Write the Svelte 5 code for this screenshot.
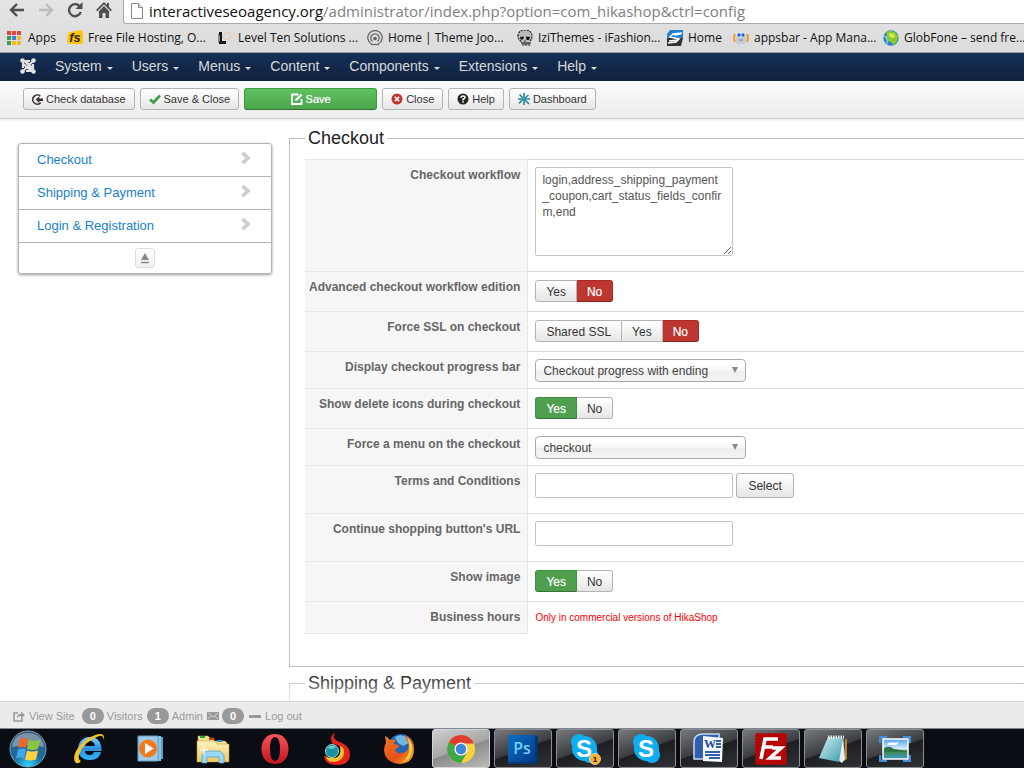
<script>
  const menus = ['System', 'Users', 'Menus', 'Content', 'Components', 'Extensions', 'Help'];
  const sections = ['Checkout', 'Shipping & Payment', 'Login & Registration'];

  let workflow = 'login,address_shipping_payment\n_coupon,cart_status_fields_confir\nm,end';
  let advanced = 'No';
  let ssl = 'No';
  let progress = 'Checkout progress with ending';
  let deleteIcons = 'Yes';
  let menu = 'checkout';
  let terms = '';
  let shopUrl = '';
  let showImage = 'Yes';
</script>

<div class="screen">
  <!-- Browser chrome -->
  <header class="browser">
    <div class="nav-row">
      <div class="nav-btns">
        <button aria-label="Back">
          <svg width="16" height="16" viewBox="0 0 16 16" fill="none" stroke="#4e4e4e" stroke-width="2.4"><path d="M15 8H2M8 2L2 8l6 6"/></svg>
        </button>
        <button aria-label="Forward">
          <svg width="16" height="16" viewBox="0 0 16 16" fill="none" stroke="#bbb" stroke-width="2.4"><path d="M1 8h13M8 2l6 6-6 6"/></svg>
        </button>
        <button aria-label="Reload">
          <svg width="16" height="16" viewBox="0 0 16 16"><path d="M12.6 4.2A6 6 0 1 0 13.8 10" fill="none" stroke="#4e4e4e" stroke-width="2.4"/><path d="M15.5 0v7H8.5z" fill="#4e4e4e"/></svg>
        </button>
        <button aria-label="Home page">
          <svg width="16" height="16" viewBox="0 0 16 16" fill="#4e4e4e"><path d="M8 0L0 8l1.2 1.2L8 2.6l6.8 6.6L16 8l-3-3V1h-2v2z"/><path d="M3 9l5-5 5 5v7H9.500v-5h-3v5H3z"/></svg>
        </button>
      </div>
      <div class="omnibox">
        <svg width="12" height="16" viewBox="0 0 12 16"><path d="M.5 .5h7l4 4v11h-11z" fill="#fff" stroke="#888"/><path d="M7.500 .5v4h4" fill="#ddd" stroke="#888"/></svg>
        <div class="url" role="textbox" tabindex="0" aria-label="Address">interactiveseoagency.org<span>/administrator/index.php?option=com_hikashop&amp;ctrl=config</span></div>
      </div>
    </div>
    <nav class="bookmarks">
      <a class="apps" href="#apps">
        <svg width="14" height="14" viewBox="0 0 14 14">
          <path d="M0 0h4v4H0zM5 0h4v4H5zM10 0h4v4h-4z" fill="#e5433b"/>
          <path d="M0 5h4v4H0zM0 10h4v4H0z" fill="#3a9a52"/>
          <path d="M5 5h4v4H5z" fill="#3d7fe6"/>
          <path d="M10 5h4v4h-4zM5 10h4v4H5zM10 10h4v4h-4z" fill="#f5b921"/>
        </svg>
        Apps
      </a>
      <a href="#fs">
        <svg width="16" height="16" viewBox="0 0 16 16"><path d="M1 3l2-1 11-2 2 2v11l-2 1H2l-2-2z" fill="#fcc80e"/><text x="8" y="12" text-anchor="middle" font-family="Liberation Sans" font-size="13" font-weight="bold" font-style="italic" fill="#3a2800">fs</text></svg>
        Free File Hosting, O...
      </a>
      <a href="#ten">
        <svg width="16" height="16" viewBox="0 0 16 16"><path d="M2 2h3v9h4v3H2z" fill="#151515"/><path d="M1 3l2 3v5l-2 2z" fill="#888"/><circle cx="10" cy="6" r="3.500" fill="none" stroke="#e9b99a" stroke-width="1.500" stroke-dasharray="1.500 1.500"/></svg>
        Level Ten Solutions ...
      </a>
      <a href="#theme">
        <svg width="16" height="16" viewBox="0 0 16 16" fill="none" stroke="#666" stroke-width="1.300"><path d="M4.500 14A7.200 7.200 0 1 1 11.500 14M5.500 11.500a4.200 4.200 0 1 1 5 0"/><circle cx="8" cy="8.500" r="1.200" fill="#555"/><path d="M4 14.500h8"/></svg>
        Home | Theme Joo...
      </a>
      <a href="#izi">
        <svg width="16" height="16" viewBox="0 0 16 16"><path d="M1 6C1 2 4 0 8 0s7 2 7 6c0 3-1 4-2 5v4H5v-3C3 11 1 9 1 6z" fill="#bbb" stroke="#222" stroke-width="1.200" stroke-dasharray="2 1"/><path d="M3 7l4-.5L6 9.500H3.500zM9 6.500l4 .5-1 3H9.500z" fill="#111"/><path d="M7 11h2M6 13h6M7 15v-3M9 15v-3M11 15v-3" stroke="#444"/></svg>
        IziThemes - iFashion...
      </a>
      <a class="short" href="#home">
        <svg width="16" height="16" viewBox="0 0 16 16"><path d="M3 0h13v8H0V4z" fill="#2181cd"/><path d="M0 8h16l-2 8H0z" fill="#333"/><path d="M15 3L6 4 3 7l9 2-3 3-8 1M14 4L7 5M11 10l-9 1" fill="none" stroke="#fff" stroke-width="1.600"/></svg>
        Home
      </a>
      <a href="#appsbar">
        <svg width="16" height="16" viewBox="0 0 16 16"><path d="M2 4Q0 8 2 12M14 4q2 4 0 8" fill="none" stroke="#f49a28" stroke-width="2"/><rect x="3" y="2" width="10" height="12" rx="3" fill="#c5cad5"/><rect x="3" y="2" width="10" height="5" rx="2" fill="#dfe6f3"/><circle cx="6" cy="5" r="1.700" fill="#2664d2"/><circle cx="10" cy="5" r="1.700" fill="#2664d2"/><path d="M6 10h4" stroke="#778"/></svg>
        appsbar - App Mana...
      </a>
      <a href="#globfone">
        <svg width="16" height="16" viewBox="0 0 16 16"><circle cx="8" cy="8" r="7.700" fill="#2c82cf"/><path d="M3 2Q8 0 12 2l3 4-1 6-4 3-2-3-4-1-2-4 2-2z" fill="#8dc928"/><path d="M6 3l5 1 1 3-3 1-3-2z" fill="#d8ea53"/><path d="M1 6q4 1 3 8" stroke="#78c9ef" stroke-width="1.500" fill="none"/></svg>
        GlobFone – send fre...
      </a>
    </nav>
  </header>

  <!-- Administrator menu -->
  <nav class="menubar">
    <a class="logo" href="#joomla" aria-label="Joomla">
      <svg width="16" height="16" viewBox="0 0 16 16" fill="none" stroke="#e0e0e0">
        <path d="M3 10V5.500Q3 3 5.500 3L13 10.500M10 3H5L13 13M13 6v5q0 2-2 2L3 5.500M6 13h5M3 13L13 3" stroke-width="2.200"/>
        <g fill="#e0e0e0" stroke="none"><circle cx="2.500" cy="2.500" r="2.300"/><circle cx="13.500" cy="2.500" r="2.300"/><circle cx="2.500" cy="13.500" r="2.300"/><circle cx="13.500" cy="13.500" r="2.300"/></g>
      </svg>
    </a>
    {#each menus as item}
      <a class="menu" href="#{item}">{item}<span class="caret"></span></a>
    {/each}
  </nav>

  <!-- Toolbar -->
  <div class="toolbar">
    <button class="tool">
      <svg width="11" height="11" viewBox="0 0 12 12"><path d="M9 2.200A5 5 0 1 0 9.500 9.500" fill="none" stroke="#333" stroke-width="1.800"/><path d="M4 6l4-3.500V5h4v2.500H8V10z" fill="#333"/></svg>
      Check database
    </button>
    <button class="tool">
      <svg width="12" height="11" viewBox="0 0 12 11"><path d="M1 5.500l3.500 3L11 1.500" fill="none" stroke="#43a047" stroke-width="2.800"/></svg>
      Save &amp; Close
    </button>
    <button class="tool save">
      <svg width="12" height="12" viewBox="0 0 12 12" fill="none" stroke="#fff" stroke-width="1.800"><path d="M7.500 1.500H1v9.500h9.500V6"/><path d="M4 8l.6-2.300L10 .8 11.500 2.300 6.200 7.500z" fill="#fff" stroke="none"/></svg>
      Save
    </button>
    <button class="tool">
      <svg width="12" height="12" viewBox="0 0 12 12"><circle cx="6" cy="6" r="5.500" fill="#bd362f"/><path d="M3.800 3.800l4.400 4.400M8.200 3.800L3.800 8.200" stroke="#fff" stroke-width="1.600"/></svg>
      Close
    </button>
    <button class="tool">
      <svg width="12" height="12" viewBox="0 0 12 12"><circle cx="6" cy="6" r="5.500" fill="#222"/><path d="M4 4.800Q4 3 6 3t2 1.600Q8 5.800 6 6.300V7.500M6 8.300v1.400" fill="none" stroke="#fff" stroke-width="1.500"/></svg>
      Help
    </button>
    <button class="tool">
      <svg width="12" height="12" viewBox="0 0 12 12" fill="none" stroke="#24869a" stroke-width="1.600"><path d="M6 0v5M0 6h5M1.500 1.500L5 5M10.500 2L6 6M5 6l-4 4.500M6 6v6M7 6h5M7 7l4 4"/></svg>
      Dashboard
    </button>
  </div>

  <main class="content">
    <aside class="sidebar">
      {#each sections as name}
        <a href="#{name}">
          {name}
          <svg width="10" height="12" viewBox="0 0 10 12"><path d="M1.500 1L7 6l-5.500 5" fill="none" stroke="#ccc" stroke-width="3.600"/></svg>
        </a>
      {/each}
      <div class="top-row">
        <button class="to-top" aria-label="Back to top">
          <svg width="10" height="11" viewBox="0 0 10 11"><path d="M5 0l4 7H1z" fill="#888"/><path d="M1 9.500h8" stroke="#888" stroke-width="1.500"/></svg>
        </button>
      </div>
    </aside>

    <form class="settings" on:submit|preventDefault>
      <fieldset>
        <legend>Checkout</legend>
        <table>
          <tbody>
            <tr>
              <th scope="row"><label for="workflow">Checkout workflow</label></th>
              <td><textarea id="workflow" bind:value={workflow} spellcheck="false"></textarea></td>
            </tr>
            <tr>
              <th scope="row">Advanced checkout workflow edition</th>
              <td>
                <div class="group">
                  {#each ['Yes', 'No'] as v}
                    <label class:on={advanced === v} class:no={v === 'No'}><input type="radio" name="advanced" value={v} bind:group={advanced} />{v}</label>
                  {/each}
                </div>
              </td>
            </tr>
            <tr>
              <th scope="row">Force SSL on checkout</th>
              <td>
                <div class="group">
                  {#each ['Shared SSL', 'Yes', 'No'] as v}
                    <label class:on={ssl === v} class:no={v === 'No'}><input type="radio" name="ssl" value={v} bind:group={ssl} />{v}</label>
                  {/each}
                </div>
              </td>
            </tr>
            <tr>
              <th scope="row"><label for="progress">Display checkout progress bar</label></th>
              <td>
                <div class="select">
                  <select id="progress" bind:value={progress}>
                    <option>Checkout progress with ending</option>
                    <option>Checkout progress</option>
                    <option>No</option>
                  </select>
                </div>
              </td>
            </tr>
            <tr>
              <th scope="row">Show delete icons during checkout</th>
              <td>
                <div class="group">
                  {#each ['Yes', 'No'] as v}
                    <label class:on={deleteIcons === v} class:no={v === 'No'}><input type="radio" name="deleteIcons" value={v} bind:group={deleteIcons} />{v}</label>
                  {/each}
                </div>
              </td>
            </tr>
            <tr>
              <th scope="row"><label for="menu">Force a menu on the checkout</label></th>
              <td>
                <div class="select">
                  <select id="menu" bind:value={menu}>
                    <option>checkout</option>
                    <option>home</option>
                  </select>
                </div>
              </td>
            </tr>
            <tr>
              <th scope="row"><label for="terms">Terms and Conditions</label></th>
              <td>
                <div class="field">
                  <input id="terms" type="text" bind:value={terms} />
                  <button class="pick" type="button">Select</button>
                </div>
              </td>
            </tr>
            <tr>
              <th scope="row"><label for="shopUrl">Continue shopping button's URL</label></th>
              <td><div class="field"><input id="shopUrl" type="text" bind:value={shopUrl} /></div></td>
            </tr>
            <tr>
              <th scope="row">Show image</th>
              <td>
                <div class="group">
                  {#each ['Yes', 'No'] as v}
                    <label class:on={showImage === v} class:no={v === 'No'}><input type="radio" name="showImage" value={v} bind:group={showImage} />{v}</label>
                  {/each}
                </div>
              </td>
            </tr>
            <tr class="last">
              <th scope="row">Business hours</th>
              <td><small>Only in commercial versions of HikaShop</small></td>
            </tr>
          </tbody>
        </table>
      </fieldset>

      <fieldset>
        <legend>Shipping &amp; Payment</legend>
      </fieldset>
    </form>
  </main>

  <!-- Status bar -->
  <footer class="status">
    <a href="#site">
      <svg width="12" height="11" viewBox="0 0 12 11"><path d="M5 2H1v8h8V7" fill="none" stroke="#999" stroke-width="1.500"/><path d="M3.500 7Q4 3 8 3V.5L12 4 8 7.500V5Q5 5 3.500 7z" fill="#999"/></svg>
      View Site
    </a>
    <span class="stat"><b>0</b>Visitors</span>
    <span class="stat"><b>1</b>Admin</span>
    <span class="stat mail">
      <svg width="12" height="8" viewBox="0 0 12 8"><path d="M0 0h12v8H0z" fill="#999"/><path d="M1 1l5 4 5-4M1 7l3-3M11 7L8 4" fill="none" stroke="#ddd" stroke-width=".8"/></svg>
      <b>0</b>
    </span>
    <a href="#logout">
      <svg width="12" height="3" viewBox="0 0 12 3"><path d="M0 0h12v3H0z" fill="#999"/></svg>
      Log out
    </a>
  </footer>

  <!-- Windows taskbar -->
  <div class="taskbar">
    <svg class="defs" width="0" height="0" aria-hidden="true">
      <defs>
        <radialGradient id="orb" cx=".5" cy=".95" r=".9"><stop offset="0" stop-color="#2fd6ff"/><stop offset=".4" stop-color="#1b6fa8"/><stop offset="1" stop-color="#38566f"/></radialGradient>
        <linearGradient id="ie" x1="0" y1="0" x2="0" y2="1"><stop offset="0" stop-color="#7fd3fa"/><stop offset=".5" stop-color="#2a8fe0"/><stop offset="1" stop-color="#35b5f5"/></linearGradient>
        <linearGradient id="folder" x1="0" y1="0" x2="0" y2="1"><stop offset="0" stop-color="#fdf3b8"/><stop offset="1" stop-color="#ecc964"/></linearGradient>
        <linearGradient id="red" x1="0" y1="0" x2="0" y2="1"><stop offset="0" stop-color="#f8555a"/><stop offset="1" stop-color="#c3121e"/></linearGradient>
        <linearGradient id="fox" x1="0" y1="0" x2="1" y2="1"><stop offset="0" stop-color="#f47b20"/><stop offset=".6" stop-color="#e6501b"/><stop offset="1" stop-color="#fbc02d"/></linearGradient>
        <linearGradient id="psg" x1="0" y1="0" x2="1" y2="1"><stop offset="0" stop-color="#0d6fc4"/><stop offset="1" stop-color="#043a86"/></linearGradient>
        <linearGradient id="pad" x1="0" y1="0" x2="1" y2="1"><stop offset="0" stop-color="#d8f2f5"/><stop offset="1" stop-color="#3799a8"/></linearGradient>
        <linearGradient id="sky" x1="0" y1="0" x2="0" y2="1"><stop offset="0" stop-color="#4aa3ea"/><stop offset=".5" stop-color="#d9f0fb"/><stop offset=".6" stop-color="#3f8a4c"/><stop offset="1" stop-color="#3f97c9"/></linearGradient>
      </defs>
    </svg>
    <button class="start" aria-label="Start">
      <svg width="38" height="38" viewBox="0 0 38 38">
        <circle cx="19" cy="19" r="18" fill="url(#orb)" stroke="#7ba0b8"/>
        <path d="M3 17Q5 3 19 3t16 14Q19 13 3 17z" fill="#fff" opacity=".35"/>
        <path d="M11 9q4-2 8 0l-2 9q-4-2-8 0z" fill="#f0642c"/>
        <path d="M20 10q5 2 11 0l-2 9q-6 2-11 0z" fill="#8cc63f"/>
        <path d="M9 19.500q4-2 8 0l-2 9q-4-2-8 0z" fill="#3ea7e8"/>
        <path d="M18 20.500q5 2 11 0l-2 9q-6 2-11 0z" fill="#fdd23b"/>
      </svg>
    </button>
    <button class="task" aria-label="Internet Explorer">
      <svg width="34" height="32" viewBox="0 0 34 32">
        <path d="M18 4C10 4 6 10 6 16s4 11 12 11c6 0 10-3 11-8h-7q-1 3-4 3-5 0-5-4h16.500C30 10 26 4 18 4zm-5 9q1-5 5-5t5 5z" fill="url(#ie)" fill-rule="evenodd"/>
        <path d="M4 30C-3 23 11 4 27 1q6-1 5 6-1-5-5-4Q11 9 7 22q-1 5 2 6-2 3-5 2z" fill="#f5c32c"/>
      </svg>
    </button>
    <button class="task" aria-label="Media Player">
      <svg width="28" height="28" viewBox="0 0 28 28"><path d="M10 2h16v22H10z" fill="#5e9fc6"/><path d="M6 1h18v25H6z" fill="#8cc3e2"/><path d="M1 1h20v25H1z" fill="#9fcbe6" stroke="#5e9fc6"/><circle cx="11" cy="13.500" r="9" fill="#f37920"/><path d="M8 8l8.500 5.500L8 19z" fill="#fff"/></svg>
    </button>
    <button class="task" aria-label="Explorer">
      <svg width="34" height="32" viewBox="0 0 34 32"><path d="M2 6V3h10l2 2h4v3h11l2 2v4H2z" fill="#f7e08d" stroke="#c59a3a" stroke-width=".5"/><path d="M4 3h5v2H4z" fill="#1fae3c"/><path d="M13 5h5v2h-5z" fill="#d83a2b"/><path d="M21 7h5v2h-5z" fill="#2f87d8"/><path d="M1 8h18l2 3h12v18H1z" fill="url(#folder)" stroke="#c59a3a" stroke-width=".5"/><path d="M6 30V22l4-4h14l4 4v8h-5v-6H11v6z" fill="#9bd8f3" stroke="#4c9cc6" stroke-width=".7"/><path d="M8 12v10M4 17h8" stroke="#fff"/></svg>
    </button>
    <button class="task" aria-label="Opera">
      <svg width="30" height="32" viewBox="0 0 30 32"><path d="M15 1C7 1 1.500 7 1.500 16S7 31 15 31s13.500-6 13.500-15S23 1 15 1zm0 3q5 0 5 12t-5 12-5-12T15 4z" fill="url(#red)" fill-rule="evenodd"/></svg>
    </button>
    <button class="task" aria-label="Torch">
      <svg width="30" height="34" viewBox="0 0 30 34"><path d="M13 0q-4 7 5 10 10 4 10 12 0 11-13 11Q3 33 2 24l10 4q9-1 8-9-1-6-9-7Q6 6 13 0z" fill="#e4231f"/><path d="M3 20q0 10 9 10 10-1 10-10 0-5-4-6 2 12-7 12T3 20z" fill="#f6c32c"/><circle cx="10" cy="19" r="6.500" fill="#1893a0" stroke="#9bd5db"/><path d="M5 16q5-4 9-1-3 3-9 1z" fill="#74ccd2"/></svg>
    </button>
    <button class="task" aria-label="Firefox">
      <svg width="32" height="32" viewBox="0 0 32 32"><circle cx="18" cy="14" r="13" fill="#2265b4"/><path d="M12 4q7-4 12 1l2 5-6 3-5-3z" fill="#6db7e8"/><path d="M2 3q3 1 5 4 4-1 7 0-4 2-3 4l5 1q0 3-4 4 1 5 7 4 8-2 6-10-1-4-4-8 9 3 10 12 1 16-14 17Q2 30 1 17q0-4 2-7z" fill="url(#fox)"/><path d="M24 4q7 6 5 15-2 8-9 10 10-9 4-25z" fill="#fcd04b"/></svg>
    </button>
    <button class="task open active" aria-label="Chrome">
      <svg width="30" height="30" viewBox="0 0 30 30"><circle cx="15" cy="15" r="14" fill="#fcd23c"/><path d="M15 15L2.900 8A14 14 0 0 0 15 29l6-10.500z" fill="#3fa64a"/><path d="M15 15L2.900 8A14 14 0 0 1 28 9.500H15z" fill="#df3d32"/><circle cx="15" cy="15" r="6.600" fill="#f5f5f5"/><circle cx="15" cy="15" r="5.200" fill="#3f86dc"/></svg>
    </button>
    <button class="task open" aria-label="Photoshop">
      <svg width="30" height="30" viewBox="0 0 30 30"><path d="M0 1h27l3 2v26l-3 1H0z" fill="#06356f"/><path d="M0 1h27v27H0z" fill="url(#psg)"/><text x="14" y="20" text-anchor="middle" font-family="Open Sans" font-size="16" font-weight="600" fill="#6fd2ff">Ps</text></svg>
    </button>
    <button class="task open" aria-label="Skype, 1 message">
      <svg width="32" height="32" viewBox="0 0 32 32"><g fill="#10aeee"><circle cx="10" cy="9" r="8"/><circle cx="21" cy="22" r="8"/><circle cx="15.500" cy="15.500" r="12.500"/></g><text x="15" y="24" text-anchor="middle" font-family="Liberation Sans" font-size="24" font-weight="bold" fill="#fff">S</text><circle cx="26" cy="26" r="5.500" fill="#fbb01c" stroke="#fff" stroke-width=".6"/><text x="26" y="29" text-anchor="middle" font-family="Liberation Sans" font-size="8" font-weight="bold" fill="#111">1</text></svg>
    </button>
    <button class="task open" aria-label="Skype">
      <svg width="32" height="32" viewBox="0 0 32 32"><g fill="#10aeee"><circle cx="10" cy="9" r="8"/><circle cx="21" cy="22" r="8"/><circle cx="15.500" cy="15.500" r="12.500"/></g><text x="15" y="24" text-anchor="middle" font-family="Liberation Sans" font-size="24" font-weight="bold" fill="#fff">S</text></svg>
    </button>
    <button class="task open" aria-label="Word">
      <svg width="32" height="32" viewBox="0 0 32 32"><path d="M1 26V8q1-7 9-7h16v25z" fill="#315fae" stroke="#c7d9f2" stroke-width="1.500"/><path d="M10 3l20 2-1 24-19-1z" fill="#f4f8ff"/><text x="17" y="15" text-anchor="middle" font-family="Liberation Serif" font-size="12" font-weight="bold" fill="#22499a">W</text><path d="M23 8h5M23 11h5M23 14h5M12 19h15M12 22h15M16 25h11" stroke="#315fae" stroke-width="2"/></svg>
    </button>
    <button class="task open" aria-label="FileZilla">
      <svg width="32" height="32" viewBox="0 0 32 32"><path d="M1 1h30v30H1z" fill="#b50505" stroke="#b50505" stroke-width="2" stroke-dasharray="2 1"/><path d="M6 26L10 6h13M9 14h9M17 15h9L15 25h11" fill="none" stroke="#fff" stroke-width="3.600"/></svg>
    </button>
    <button class="task open" aria-label="Notepad">
      <svg width="32" height="30" viewBox="0 0 32 30"><path d="M28 5h2v20l-3 2z" fill="#b78338"/><path d="M26 3l2 22-3 4-4-3z" fill="#e8eff0"/><path d="M11 3l15 1-4 24-20-4z" fill="url(#pad)"/><path d="M11 3h16" stroke="#e9edee" stroke-width="3" stroke-dasharray="1.500 1"/></svg>
    </button>
    <button class="task open" aria-label="Picture viewer">
      <svg width="32" height="26" viewBox="0 0 32 26"><path d="M1 7V1h7M24 1h7v6M31 19v6h-7M8 25H1v-6" fill="none" stroke="#3f8fdc" stroke-width="2.500"/><path d="M4 3h25v20H4z" fill="url(#sky)" stroke="#fff" stroke-width="1.500"/><path d="M5 12q5-3 10 1l13 2v1H5z" fill="#2c7446"/><path d="M8 8q4-3 7-1l5-1-3 3H9z" fill="#fff"/></svg>
    </button>
  </div>
</div>

<style>
  :global(body) {
    margin: 0;
    background: #fff;
  }

  .screen {
    height: 100vh;
    display: flex;
    flex-direction: column;
    overflow: hidden;
    font-family: 'Liberation Sans', Arial, sans-serif;
    font-size: 12px;
    line-height: 16px;
    color: #333;
  }

  a { text-decoration: none; }
  svg { flex-shrink: 0; }

  button {
    font-family: inherit;
    cursor: pointer;
  }

  /* Browser */
  .browser {
    flex-shrink: 0;
    background: linear-gradient(#e4e4e4, #dcdcdc);
    border-bottom: 1px solid #9c9c9c;
    font-family: 'Open Sans', 'Noto Sans', sans-serif;
  }

  .nav-row {
    display: flex;
    height: 24px;
  }

  .nav-btns {
    display: flex;
    gap: 13px;
    padding: 2px 11px 0 9px;
  }

  .nav-btns button {
    width: 16px;
    height: 16px;
    padding: 0;
    border: 0;
    background: none;
  }

  .omnibox {
    flex: 1;
    display: flex;
    align-items: center;
    gap: 6px;
    padding: 0 0 2px 7px;
    box-sizing: border-box;
    background: #fff;
    border-left: 1px solid #aaa;
    border-bottom: 1px solid #aaa;
    border-bottom-left-radius: 3px;
    overflow: hidden;
  }

  .url {
    font-size: 15px;
    line-height: 20px;
    white-space: nowrap;
    color: #111;
  }

  .url span { color: #808080; }

  .bookmarks {
    display: flex;
    height: 28px;
    padding-left: 7px;
    overflow: hidden;
  }

  .bookmarks a {
    display: flex;
    align-items: center;
    gap: 5px;
    width: 150px;
    flex-shrink: 0;
    font-size: 12px;
    color: #111;
    white-space: nowrap;
  }

  .bookmarks a.apps { width: 60px; gap: 7px; }
  .bookmarks a.short { width: 66px; }

  /* Menu bar */
  .menubar {
    flex-shrink: 0;
    display: flex;
    align-items: center;
    gap: 19px;
    height: 28px;
    padding: 0 20px 2px;
    box-sizing: border-box;
    background: linear-gradient(#152f56, #10223e);
  }

  .logo {
    display: flex;
    justify-content: flex-end;
  }

  .menu {
    display: flex;
    align-items: center;
    gap: 5px;
    font-size: 14px;
    color: #d9d9d9;
  }

  .caret {
    margin-top: 5px;
    border: 3px solid transparent;
    border-top-color: #d9d9d9;
    border-bottom: 0;
  }

  /* Toolbar */
  .toolbar {
    flex-shrink: 0;
    display: flex;
    gap: 5px;
    height: 38px;
    padding: 7px 23px 0;
    box-sizing: border-box;
    background: linear-gradient(#fbfbfb, #ececec);
    border-bottom: 1px solid #d0d0d0;
    box-shadow: 0 1px 2px rgba(0, 0, 0, .1);
  }

  .tool {
    display: flex;
    align-items: center;
    justify-content: center;
    gap: 3px;
    height: 22px;
    padding: 0 8px;
    border: 1px solid #b3b3b3;
    border-radius: 3px;
    background: linear-gradient(#fff, #e6e6e6);
    font-size: 11px;
    color: #333;
    white-space: nowrap;
  }

  .save {
    width: 133px;
    border-color: #3f9a3f #3f9a3f #387038;
    background: linear-gradient(#5fc15f, #4ba64b);
    color: #fff;
    text-shadow: 0 0 1px rgba(255, 255, 255, .6);
  }

  /* Content */
  .content {
    flex: 1;
    min-height: 0;
    display: flex;
    align-items: flex-start;
    gap: 17px;
    padding: 9px 0 0 18px;
    overflow: hidden;
  }

  .sidebar {
    flex: 0 0 252px;
    margin-top: 15px;
    border: 1px solid #b5b5b5;
    border-radius: 3px;
    box-shadow: 0 1px 3px rgba(0, 0, 0, .4);
  }

  .sidebar a {
    display: flex;
    align-items: center;
    justify-content: space-between;
    height: 32px;
    padding: 0 20px 0 18px;
    border-bottom: 1px solid #b5b5b5;
    font-size: 13px;
    color: #1a7fc9;
  }

  .sidebar a svg { margin-bottom: 4px; }

  .top-row {
    display: flex;
    justify-content: center;
    padding: 5px 0;
  }

  .to-top {
    display: flex;
    align-items: center;
    justify-content: center;
    width: 20px;
    height: 20px;
    padding: 0;
    border: 1px solid #ddd;
    border-radius: 3px;
    background: linear-gradient(#fff, #f0f0f0);
  }

  .settings {
    flex: 1;
    min-width: 0;
  }

  fieldset {
    min-width: 0;
    margin: 0 -2px 6px 0;
    padding: 11px 0 32px 15px;
    border: 1px solid #c0c0c0;
  }

  legend {
    padding: 0 3px;
    font-size: 18px;
    line-height: 20px;
    color: #222;
  }

  table {
    width: 100%;
    border-collapse: collapse;
  }

  th, td {
    height: 25px;
    padding: 7px;
    border-top: 1px solid #ddd;
    vertical-align: top;
    text-align: left;
  }

  th {
    width: 211px;
    padding-left: 4px;
    background: #f6f6f6;
    border-top-color: #e6e6e6;
    border-right: 1px solid #e6e6e6;
    font-weight: bold;
    color: #666;
    text-align: right;
    white-space: nowrap;
  }

  .last th, .last td { height: 17px; }
  .last th { border-bottom: 1px solid #e6e6e6; }

  tr:has(.select) th, tr:has(.select) td { height: 22px; }

  textarea, .field input {
    display: block;
    width: 198px;
    box-sizing: border-box;
    border: 1px solid #c4c4c4;
    border-radius: 2px;
    background: #fff;
    font-family: inherit;
    font-size: 12px;
    line-height: 16px;
    color: #555;
  }

  textarea {
    height: 89px;
    margin-bottom: 8px;
    padding: 4px 6px;
  }

  .field {
    display: flex;
    gap: 3px;
    margin-bottom: 8px;
  }

  .field input {
    height: 25px;
    padding: 4px 6px;
  }

  .pick {
    height: 25px;
    padding: 0 11px;
    border: 1px solid #b3b3b3;
    border-radius: 3px;
    background: linear-gradient(#fff, #e6e6e6);
    font-size: 12px;
    color: #333;
  }

  .group {
    display: flex;
    padding-top: 1px;
  }

  .group label {
    position: relative;
    height: 22px;
    padding: 0 10px;
    box-sizing: border-box;
    border: 1px solid #b3b3b3;
    background: linear-gradient(#fff, #e6e6e6);
    line-height: 22px;
    cursor: pointer;
  }

  .group label + label { border-left-width: 0; }
  .group label:first-child { border-radius: 3px 0 0 3px; }
  .group label:last-child { border-radius: 0 3px 3px 0; }

  .group label.on {
    border-color: #3f8f3f #3f8f3f #337333;
    background: #4f9f4f;
    color: #fff;
    text-shadow: 0 0 1px rgba(255, 255, 255, .5);
  }

  .group label.on.no {
    border-color: #a62c26 #a62c26 #8a221d;
    background: #bd362f;
  }

  .group input {
    position: absolute;
    inset: 0;
    margin: 0;
    opacity: 0;
  }

  .select {
    position: relative;
    width: 211px;
  }

  .select::after {
    content: '';
    position: absolute;
    top: 8px;
    right: 8px;
    border: 3px solid transparent;
    border-top: 6px solid #888;
    border-bottom: 0;
    pointer-events: none;
  }

  select {
    display: block;
    appearance: none;
    width: 100%;
    height: 23px;
    margin-bottom: -1px;
    padding: 0 7px;
    border: 1px solid #aaa;
    border-radius: 4px;
    background: linear-gradient(#fff 20%, #f6f6f6 50%, #eee 52%, #f4f4f4);
    font-family: inherit;
    font-size: 12px;
    color: #444;
  }

  small {
    font-size: 10px;
    color: #f00;
  }

  /* Status bar */
  .status {
    flex-shrink: 0;
    display: flex;
    align-items: center;
    gap: 7px;
    height: 27px;
    padding: 2px 13px 0;
    box-sizing: border-box;
    background: #ebebeb;
    border-top: 1px solid #d4d4d4;
    box-shadow: 0 -15px 15px rgba(255, 255, 255, .6);
    z-index: 1;
    font-size: 11px;
    color: #999;
  }

  .status a {
    display: flex;
    align-items: center;
    gap: 4px;
    color: #999;
  }

  .stat {
    display: flex;
    align-items: center;
    gap: 3px;
  }

  .stat + .stat { margin-left: -3px; }
  .mail { margin-right: -2px; }

  .stat b {
    padding: 0 8px;
    border-radius: 8px;
    background: #999;
    color: #fff;
  }

  /* Taskbar */
  .taskbar {
    flex-shrink: 0;
    display: flex;
    gap: 4px;
    height: 40px;
    box-sizing: border-box;
    border-top: 1px solid #7d8791;
    background: #0a0e14;
    z-index: 1;
  }

  .defs { position: absolute; }

  .start, .task {
    display: flex;
    align-items: center;
    justify-content: center;
    width: 58px;
    padding: 0;
    border: 1px solid transparent;
    background: none;
  }

  .start { width: 56px; }

  .open {
    border-color: #8a8d91;
    border-radius: 3px;
    background: linear-gradient(160deg, #77797c, #3a3c40 50%, #1c1e22 52%, #303236);
  }

  .active {
    border-color: #d5d5d5;
    background: linear-gradient(160deg, #cfcfcf, #a5a5a5 50%, #8b8b8b 52%, #b9b9b9);
  }
</style>
